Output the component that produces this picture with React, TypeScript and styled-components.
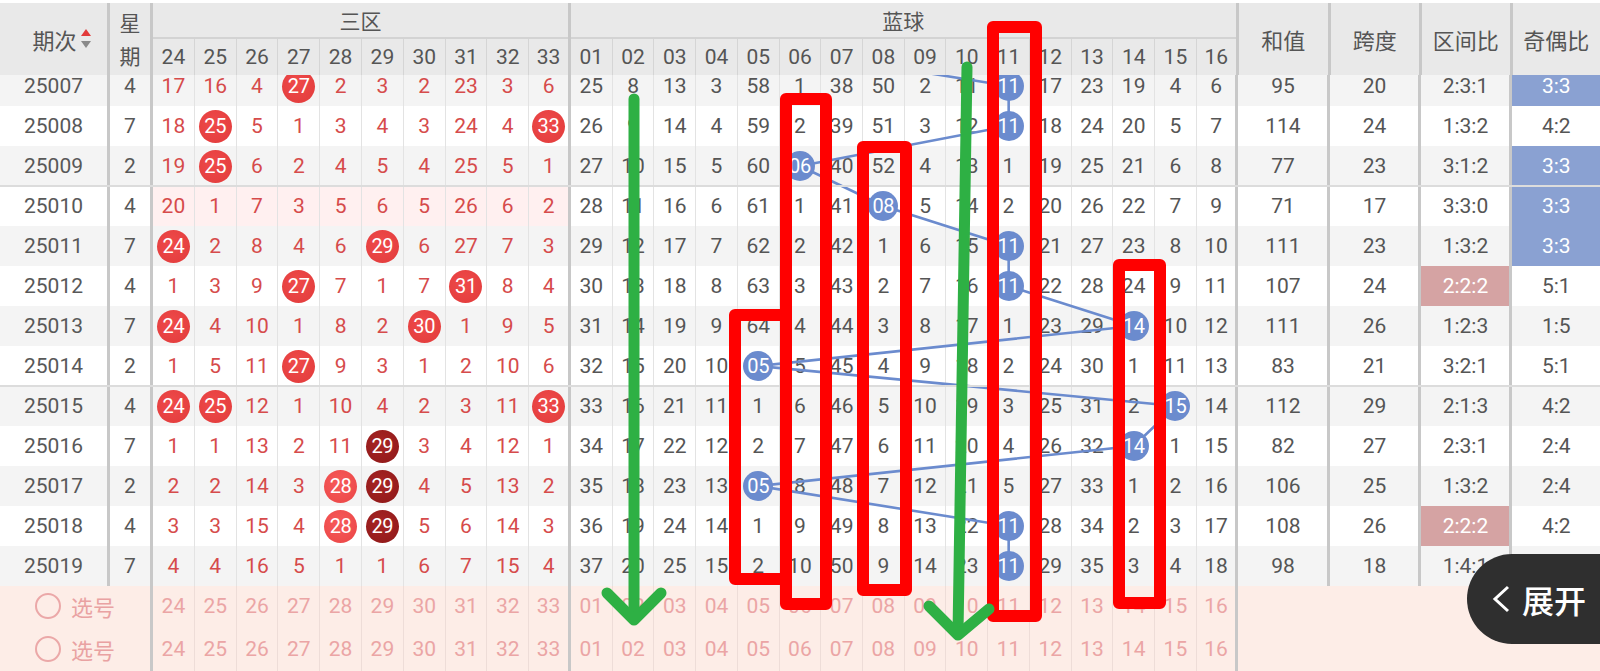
import React from 'react';
import styled, { createGlobalStyle } from 'styled-components';

const ISSUE_W = 110;
const WEEK_W = 43;
const RED_W = 41.8;
const BLUE_W = 41.73;
const SUM_W = 92;
const SPAN_W = 91;
const ZONE_W = 91;
const BLUE_X0 = ISSUE_W + WEEK_W + RED_W * 10;
const ROW_H = 40;

type CellValue = number | string;

interface Draw {
  issue: string;
  week: number;
  red: CellValue[];
  blue: CellValue[];
  sum: number;
  span: number;
  zone: string;
  oe: string;
  zoneHl?: boolean;
  oeHl?: boolean;
  miss?: boolean;
}

const draws: Draw[] = [
  { issue: '25007', week: 4, red: [17, 16, 4, '*27', 2, 3, 2, 23, 3, 6], blue: [25, 8, 13, 3, 58, 1, 38, 50, 2, 11, '*11', 17, 23, 19, 4, 6], sum: 95, span: 20, zone: '2:3:1', oe: '3:3', oeHl: true },
  { issue: '25008', week: 7, red: [18, '*25', 5, 1, 3, 4, 3, 24, 4, '*33'], blue: [26, 9, 14, 4, 59, 2, 39, 51, 3, 12, '*11', 18, 24, 20, 5, 7], sum: 114, span: 24, zone: '1:3:2', oe: '4:2' },
  { issue: '25009', week: 2, red: [19, '*25', 6, 2, 4, 5, 4, 25, 5, 1], blue: [27, 10, 15, 5, 60, '*06', 40, 52, 4, 13, 1, 19, 25, 21, 6, 8], sum: 77, span: 23, zone: '3:1:2', oe: '3:3', oeHl: true },
  { issue: '25010', week: 4, red: [20, 1, 7, 3, 5, 6, 5, 26, 6, 2], blue: [28, 11, 16, 6, 61, 1, 41, '*08', 5, 14, 2, 20, 26, 22, 7, 9], sum: 71, span: 17, zone: '3:3:0', oe: '3:3', oeHl: true, miss: true },
  { issue: '25011', week: 7, red: ['*24', 2, 8, 4, 6, '*29', 6, 27, 7, 3], blue: [29, 12, 17, 7, 62, 2, 42, 1, 6, 15, '*11', 21, 27, 23, 8, 10], sum: 111, span: 23, zone: '1:3:2', oe: '3:3', oeHl: true },
  { issue: '25012', week: 4, red: [1, 3, 9, '*27', 7, 1, 7, '*31', 8, 4], blue: [30, 13, 18, 8, 63, 3, 43, 2, 7, 16, '*11', 22, 28, 24, 9, 11], sum: 107, span: 24, zone: '2:2:2', oe: '5:1', zoneHl: true },
  { issue: '25013', week: 7, red: ['*24', 4, 10, 1, 8, 2, '*30', 1, 9, 5], blue: [31, 14, 19, 9, 64, 4, 44, 3, 8, 17, 1, 23, 29, '*14', 10, 12], sum: 111, span: 26, zone: '1:2:3', oe: '1:5' },
  { issue: '25014', week: 2, red: [1, 5, 11, '*27', 9, 3, 1, 2, 10, 6], blue: [32, 15, 20, 10, '*05', 5, 45, 4, 9, 18, 2, 24, 30, 1, 11, 13], sum: 83, span: 21, zone: '3:2:1', oe: '5:1' },
  { issue: '25015', week: 4, red: ['*24', '*25', 12, 1, 10, 4, 2, 3, 11, '*33'], blue: [33, 16, 21, 11, 1, 6, 46, 5, 10, 19, 3, 25, 31, 2, '*15', 14], sum: 112, span: 29, zone: '2:1:3', oe: '4:2' },
  { issue: '25016', week: 7, red: [1, 1, 13, 2, 11, '!29', 3, 4, 12, 1], blue: [34, 17, 22, 12, 2, 7, 47, 6, 11, 20, 4, 26, 32, '*14', 1, 15], sum: 82, span: 27, zone: '2:3:1', oe: '2:4' },
  { issue: '25017', week: 2, red: [2, 2, 14, 3, '^28', '!29', 4, 5, 13, 2], blue: [35, 18, 23, 13, '*05', 8, 48, 7, 12, 21, 5, 27, 33, 1, 2, 16], sum: 106, span: 25, zone: '1:3:2', oe: '2:4' },
  { issue: '25018', week: 4, red: [3, 3, 15, 4, '^28', '!29', 5, 6, 14, 3], blue: [36, 19, 24, 14, 1, 9, 49, 8, 13, 22, '*11', 28, 34, 2, 3, 17], sum: 108, span: 26, zone: '2:2:2', oe: '4:2', zoneHl: true },
  { issue: '25019', week: 7, red: [4, 4, 16, 5, 1, 1, 6, 7, 15, 4], blue: [37, 20, 25, 15, 2, 10, 50, 9, 14, 23, '*11', 29, 35, 3, 4, 18], sum: 98, span: 18, zone: '1:4:1', oe: '4:2' },
];

const redLabels = ['24', '25', '26', '27', '28', '29', '30', '31', '32', '33'];
const blueLabels = Array.from({ length: 16 }, (_, i) => String(i + 1).padStart(2, '0'));

const GlobalStyle = createGlobalStyle`
  html, body { margin: 0; padding: 0; background: #ffffff; }
  body { font-family: Roboto, "Noto Sans CJK SC", sans-serif; }
  * { box-sizing: border-box; }
`;

type Edge = 'thick' | 'thin' | 'none';

const edgeCss = (e: Edge | undefined, thin = '#e3e3e3') =>
  e === 'thick' ? 'border-right: 3px solid #c8c8c8;' : e === 'thin' ? `border-right: 1px solid ${thin};` : '';

const Page = styled.div`
  position: relative;
  width: 1600px;
  height: 671px;
  overflow: hidden;
  padding-top: 3px;
  font-family: Roboto, "Noto Sans CJK SC", sans-serif;
`;

/* ---------- header ---------- */

const Header = styled.div`
  display: flex;
  height: 72px;
  background: #e9e9e9;
  color: #555;
  font-family: "Noto Sans CJK SC", Roboto, sans-serif;
`;

const HeadCell = styled.div<{ $w?: number; $edge?: Edge }>`
  flex: ${(p) => (p.$w ? `0 0 ${p.$w}px` : '1 1 0')};
  display: flex;
  align-items: center;
  justify-content: center;
  font-size: 22px;
  line-height: 1;
  ${(p) => edgeCss(p.$edge)}
`;

const IssueLabel = styled.div`
  display: flex;
  align-items: center;
  gap: 4px;
  padding-left: 16px;
  font-size: 22px;
`;

const WeekLabel = styled.div`
  display: flex;
  flex-direction: column;
  align-items: center;
  font-size: 21px;
  line-height: 33px;
`;

const Group = styled.div<{ $w: number }>`
  flex: 0 0 ${(p) => p.$w}px;
  display: flex;
  flex-direction: column;
  border-right: 3px solid #c8c8c8;
`;

const GroupTitle = styled.div`
  height: 36px;
  display: flex;
  align-items: center;
  justify-content: center;
  font-size: 21px;
  border-bottom: 2px solid #d3d3d3;
`;

const LabelRow = styled.div`
  flex: 1;
  display: flex;
`;

const Label = styled.div<{ $w?: number }>`
  flex: ${(p) => (p.$w ? `0 0 ${p.$w}px` : '1 1 0')};
  display: flex;
  align-items: center;
  justify-content: center;
  font-family: Roboto, sans-serif;
  font-size: 21px;
  ${(p) => (p.$w ? 'border-right: 1px solid #d5d5d5;' : '')}
`;

/* ---------- body ---------- */

const Body = styled.div`
  position: relative;
  height: 596px;
  overflow: hidden;
`;

const BodyInner = styled.div`
  position: relative;
  margin-top: -9px;
`;

const Row = styled.div<{ $stripe: boolean; $divider?: boolean }>`
  position: relative;
  display: flex;
  height: ${ROW_H}px;
  background: ${(p) => (p.$stripe ? '#f4f4f4' : '#ffffff')};
  font-size: 21px;
  color: #555;
  &::before {
    content: '';
    display: ${(p) => (p.$divider ? 'block' : 'none')};
    position: absolute;
    left: 0;
    right: 0;
    top: -1px;
    height: 2px;
    background: #dcdcdc;
    z-index: 1;
  }
`;

const Cell = styled.div<{ $w?: number; $edge?: Edge }>`
  flex: ${(p) => (p.$w ? `0 0 ${p.$w}px` : '1 1 0')};
  height: 100%;
  display: flex;
  align-items: center;
  justify-content: center;
  ${(p) => edgeCss(p.$edge)}
`;

const IssueCell = styled(Cell)`
  color: #585858;
`;

const RedCell = styled(Cell)<{ $miss?: boolean }>`
  color: #d64b4b;
  background: ${(p) => (p.$miss ? '#fff0f0' : 'transparent')};
`;

const BlueCell = styled(Cell)`
  color: #555;
`;

const StatCell = styled(Cell)<{ $hl?: 'blue' | 'pink' }>`
  background: ${(p) => (p.$hl === 'blue' ? '#8aa1d2' : p.$hl === 'pink' ? '#d5a3a3' : 'transparent')};
  color: ${(p) => (p.$hl ? '#ffffff' : '#555')};
`;

type Tone = 'red' | 'light' | 'dark' | 'blue';

const ballBg: Record<Tone, string> = {
  red: 'radial-gradient(circle at 45% 40%, #ef4a4a, #e13b3b)',
  light: 'radial-gradient(circle at 45% 40%, #f75a5a, #ea4545)',
  dark: 'radial-gradient(circle at 45% 40%, #a82424, #8d1818)',
  blue: '#6b8bce',
};

const Ball = styled.span<{ $tone: Tone }>`
  position: relative;
  z-index: 2;
  width: ${(p) => (p.$tone === 'blue' ? 30 : 33)}px;
  height: ${(p) => (p.$tone === 'blue' ? 30 : 33)}px;
  flex: 0 0 auto;
  border-radius: 50%;
  background: ${(p) => ballBg[p.$tone]};
  color: #ffffff;
  font-size: 20px;
  display: flex;
  align-items: center;
  justify-content: center;
  letter-spacing: -0.3px;
`;

const Trend = styled.svg`
  position: absolute;
  left: 0;
  top: 0;
  z-index: 1;
  overflow: visible;
  pointer-events: none;
`;

/* ---------- pick rows ---------- */

const PickRow = styled.div<{ $h: number }>`
  display: flex;
  height: ${(p) => p.$h}px;
  background: #fdede7;
  color: #eba5a5;
  font-size: 21px;
`;

const PickCell = styled.div<{ $w?: number; $edge?: Edge }>`
  flex: ${(p) => (p.$w ? `0 0 ${p.$w}px` : '1 1 0')};
  height: 100%;
  display: flex;
  align-items: center;
  justify-content: center;
  ${(p) => edgeCss(p.$edge, '#eeddd8')}
`;

const PickLead = styled(PickCell)`
  justify-content: flex-start;
  padding-left: 35px;
  gap: 10px;
  font-family: "Noto Sans CJK SC", sans-serif;
  font-size: 22px;
  color: #e9a2a2;
`;

const Radio = styled.span`
  width: 26px;
  height: 26px;
  border-radius: 50%;
  border: 2px solid #eba8a8;
`;

/* ---------- overlays ---------- */

const Annotations = styled.svg`
  position: absolute;
  left: 0;
  top: 0;
  z-index: 10;
  pointer-events: none;
`;

const ExpandButton = styled.div`
  position: absolute;
  right: 0;
  top: 554px;
  width: 133px;
  height: 90px;
  border-radius: 45px 0 0 45px;
  background: #2f2f2f;
  color: #ffffff;
  display: flex;
  align-items: center;
  gap: 11px;
  padding-left: 24px;
  font-family: "Noto Sans CJK SC", sans-serif;
  font-size: 32px;
  font-weight: 500;
  z-index: 11;
`;

const SortIcon = () => (
  <svg width="10" height="20" viewBox="0 0 10 20">
    <polygon points="0,7 5,0 10,7" fill="#e23a3a" />
    <polygon points="0,12 10,12 5,19" fill="#8a8a8a" />
  </svg>
);

const parseBall = (v: CellValue): { tone: Tone; text: string } | null => {
  if (typeof v !== 'string') return null;
  const k = v[0];
  const text = v.slice(1);
  return { tone: k === '!' ? 'dark' : k === '^' ? 'light' : 'red', text };
};

const blueCenterX = (c: number) => BLUE_X0 + c * BLUE_W + (BLUE_W - 1) / 2;

const trendPoints: [number, number][] = [
  [blueCenterX(4), -ROW_H / 2],
  ...draws.map((d, i): [number, number] => {
    const c = d.blue.findIndex((v) => typeof v === 'string');
    return [blueCenterX(c), i * ROW_H + ROW_H / 2];
  }),
];

export default function App() {
  return (
    <Page>
      <GlobalStyle />
      <Header>
        <HeadCell $w={ISSUE_W} $edge="thick">
          <IssueLabel>
            期次
            <SortIcon />
          </IssueLabel>
        </HeadCell>
        <HeadCell $w={WEEK_W} $edge="thick">
          <WeekLabel>
            <span>星</span>
            <span>期</span>
          </WeekLabel>
        </HeadCell>
        <Group $w={RED_W * 10}>
          <GroupTitle>三区</GroupTitle>
          <LabelRow>
            {redLabels.map((l, i) => (
              <Label key={l} $w={i < 9 ? RED_W : undefined}>
                {l}
              </Label>
            ))}
          </LabelRow>
        </Group>
        <Group $w={BLUE_W * 16}>
          <GroupTitle>蓝球</GroupTitle>
          <LabelRow>
            {blueLabels.map((l, i) => (
              <Label key={l} $w={i < 15 ? BLUE_W : undefined}>
                {l}
              </Label>
            ))}
          </LabelRow>
        </Group>
        <HeadCell $w={SUM_W} $edge="thick">和值</HeadCell>
        <HeadCell $w={SPAN_W} $edge="thick">跨度</HeadCell>
        <HeadCell $w={ZONE_W} $edge="thick">区间比</HeadCell>
        <HeadCell>奇偶比</HeadCell>
      </Header>

      <Body>
        <BodyInner>
          <Trend width={1600} height={600} viewBox="0 0 1600 600">
            <polyline
              points={trendPoints.map((p) => p.join(',')).join(' ')}
              fill="none"
              stroke="#6b8bce"
              strokeWidth={2.6}
            />
          </Trend>

          {draws.map((d, i) => (
            <Row key={d.issue} $stripe={i % 2 === 0} $divider={i === 3 || i === 8}>
              <IssueCell $w={ISSUE_W} $edge="thick">{d.issue}</IssueCell>
              <IssueCell $w={WEEK_W} $edge="thick">{d.week}</IssueCell>
              {d.red.map((v, j) => {
                const b = parseBall(v);
                return (
                  <RedCell key={j} $w={RED_W} $edge={j === 9 ? 'thick' : 'thin'} $miss={d.miss}>
                    {b ? <Ball $tone={b.tone}>{b.text}</Ball> : v}
                  </RedCell>
                );
              })}
              {d.blue.map((v, j) => {
                const b = parseBall(v);
                return (
                  <BlueCell key={j} $w={BLUE_W} $edge={j === 15 ? 'thick' : 'thin'}>
                    {b ? <Ball $tone="blue">{b.text}</Ball> : v}
                  </BlueCell>
                );
              })}
              <StatCell $w={SUM_W} $edge="thick">{d.sum}</StatCell>
              <StatCell $w={SPAN_W} $edge="thick">{d.span}</StatCell>
              <StatCell $w={ZONE_W} $edge="thick" $hl={d.zoneHl ? 'pink' : undefined}>
                {d.zone}
              </StatCell>
              <StatCell $hl={d.oeHl ? 'blue' : undefined}>{d.oe}</StatCell>
            </Row>
          ))}

          {[40, 45].map((h, k) => (
            <PickRow key={k} $h={h}>
              <PickLead $w={ISSUE_W + WEEK_W} $edge="thick">
                <Radio />
                选号
              </PickLead>
              {redLabels.map((l, j) => (
                <PickCell key={l} $w={RED_W} $edge={j === 9 ? 'thick' : 'thin'}>
                  {l}
                </PickCell>
              ))}
              {blueLabels.map((l, j) => (
                <PickCell key={l} $w={BLUE_W} $edge={j === 15 ? 'thick' : 'thin'}>
                  {l}
                </PickCell>
              ))}
              <PickCell />
            </PickRow>
          ))}
        </BodyInner>
      </Body>

      <Annotations width={1600} height={671} viewBox="0 0 1600 671">
        <g fill="none" stroke="#ff0000" strokeWidth={12} strokeLinejoin="round">
          <rect x={993} y={27} width={43} height={589} />
          <rect x={786} y={99} width={40} height={505} />
          <rect x={863} y={147} width={43} height={443} />
          <rect x={735} y={315} width={51} height={264} />
          <rect x={1119} y={265} width={41} height={338} />
        </g>
        <g fill="none" stroke="#2eb044" strokeWidth={11} strokeLinecap="round" strokeLinejoin="round">
          <line x1={634} y1={99} x2={634} y2={619} />
          <polyline points="607,593 634,620 661,593" />
          <line x1={967} y1={67} x2={958} y2={633} />
          <polyline points="929,606 958,635 989,609" />
        </g>
      </Annotations>

      <ExpandButton>
        <svg width="20" height="28" viewBox="0 0 20 28">
          <polyline points="17,2 4,14 17,26" fill="none" stroke="#ffffff" strokeWidth={3} strokeLinejoin="miter" />
        </svg>
        展开
      </ExpandButton>
    </Page>
  );
}
